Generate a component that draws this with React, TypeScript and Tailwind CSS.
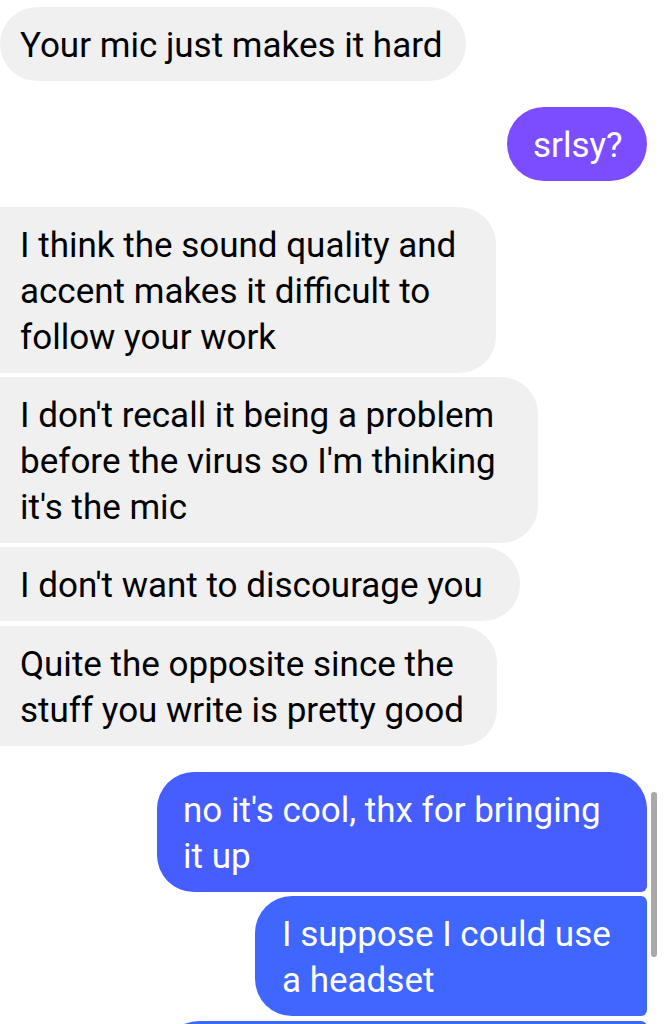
import React from "react";

const font = { fontFamily: "Roboto, 'Noto Sans', sans-serif" };

export default function App() {
  return (
    <div className="relative w-[664px] h-[1024px] overflow-hidden bg-white" style={font}>
      <div className="flex flex-col pt-[7px] text-[35px] leading-[46px]">
        <div className="self-start w-[466px] rounded-[37px] bg-[#f0f0f0] text-black pl-[20px] pt-[16px] pb-[12px] whitespace-nowrap">
          Your mic just makes it hard
        </div>
        <div className="self-end mr-[17px] mt-[26px] w-[140px] rounded-[37px] bg-[#7c4dff] text-white pl-[26px] pt-[16px] pb-[12px] whitespace-nowrap">
          srlsy?
        </div>

        <div className="flex flex-col mt-[26px] items-start">
          <div className="-ml-[20px] w-[516px] rounded-l-[6px] rounded-r-[37px] bg-[#f0f0f0] text-black pl-[40px] pt-[16px] pb-[12px] whitespace-nowrap">
            I think the sound quality and
            <br />
            accent makes it difficult to
            <br />
            follow your work
          </div>
          <div className="-ml-[20px] mt-[4px] w-[558px] rounded-l-[6px] rounded-r-[37px] bg-[#f0f0f0] text-black pl-[40px] pt-[16px] pb-[12px] whitespace-nowrap">
            I don't recall it being a problem
            <br />
            before the virus so I'm thinking
            <br />
            it's the mic
          </div>
          <div className="-ml-[20px] mt-[4px] w-[540px] rounded-l-[6px] rounded-r-[37px] bg-[#f0f0f0] text-black pl-[40px] pt-[16px] pb-[12px] whitespace-nowrap">
            I don't want to discourage you
          </div>
          <div className="-ml-[20px] mt-[5px] w-[517px] rounded-l-[6px] rounded-r-[37px] bg-[#f0f0f0] text-black pl-[40px] pt-[16px] pb-[12px] whitespace-nowrap">
            Quite the opposite since the
            <br />
            stuff you write is pretty good
          </div>
        </div>

        <div className="flex flex-col mt-[26px] items-end pr-[17px]">
          <div className="w-[490px] rounded-l-[37px] rounded-tr-[37px] rounded-br-[6px] bg-[#465dff] text-white pl-[26px] pt-[16px] pb-[12px] whitespace-nowrap">
            no it's cool, thx for bringing
            <br />
            it up
          </div>
          <div className="mt-[4px] w-[392px] rounded-l-[37px] rounded-r-[6px] bg-[#3f66ff] text-white pl-[27px] pt-[16px] pb-[12px] whitespace-nowrap">
            I suppose I could use
            <br />
            a headset
          </div>
          <div className="mt-[5px] w-[485px] h-[74px] rounded-l-[37px] rounded-r-[6px] bg-[#3a6aff]" />
        </div>
      </div>

      <div className="absolute left-[651px] top-[792px] w-[6px] h-[165px] rounded-full bg-[#a9a9a9]" />
    </div>
  );
}
